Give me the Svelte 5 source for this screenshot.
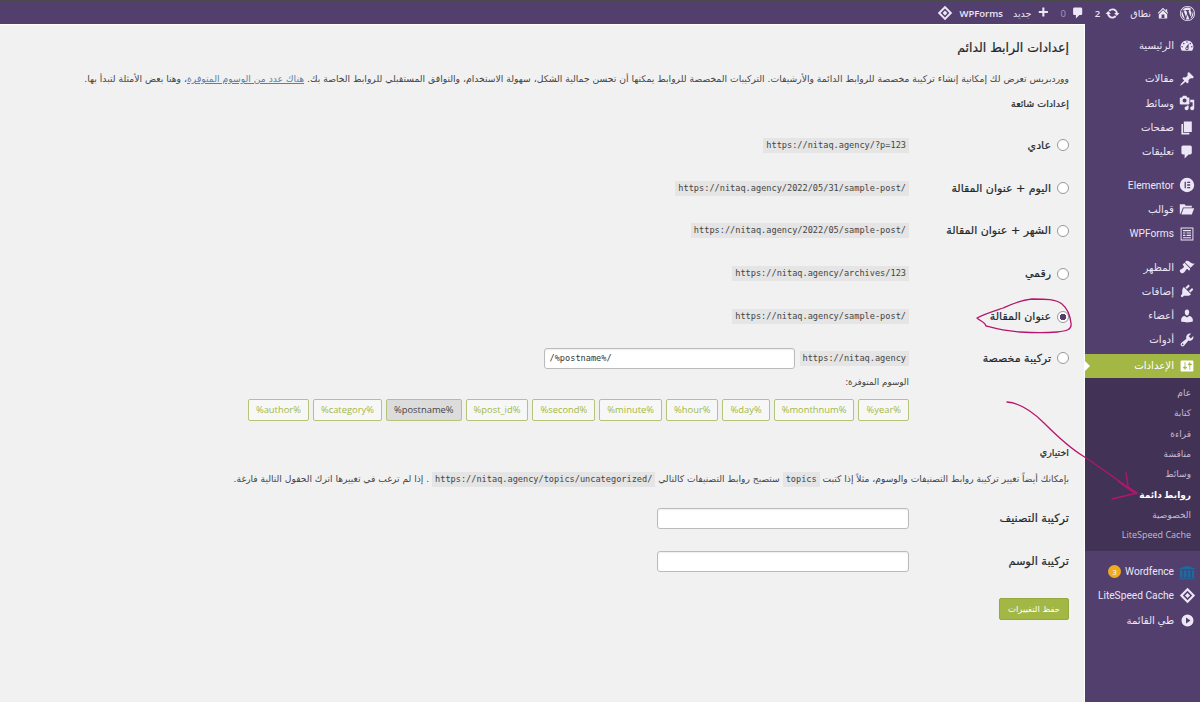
<script>
	const icons = {
		dash: 'M3.76 16h12.48c1.1-1.37 1.76-3.11 1.76-5 0-4.42-3.58-8-8-8s-8 3.58-8 8c0 1.89.66 3.63 1.76 5zM10 4c.55 0 1 .45 1 1s-.45 1-1 1-1-.45-1-1 .45-1 1-1zM6 6c.55 0 1 .45 1 1s-.45 1-1 1-1-.45-1-1 .45-1 1-1zm8 0c.55 0 1 .45 1 1s-.45 1-1 1-1-.45-1-1 .45-1 1-1zm-5.37 5.55L12 7v6c0 1.1-.9 2-2 2s-2-.9-2-2c0-.57.24-1.08.63-1.45zM4 10c.55 0 1 .45 1 1s-.45 1-1 1-1-.45-1-1 .45-1 1-1zm12 0c.55 0 1 .45 1 1s-.45 1-1 1-1-.45-1-1 .45-1 1-1zm-5 3c0-.55-.45-1-1-1s-1 .45-1 1 .45 1 1 1 1-.45 1-1z',
		pin: 'M10.44 3.02l1.82-1.82 6.36 6.35-1.83 1.82c-1.05-.68-2.48-.57-3.41.36l-.75.75c-.92.93-1.04 2.35-.35 3.41l-1.83 1.82-2.41-2.41-2.8 2.79c-.42.42-3.38 2.71-3.8 2.29s1.86-3.39 2.28-3.81l2.79-2.79L4.1 9.36l1.83-1.82c1.05.69 2.48.57 3.4-.36l.75-.75c.93-.92 1.05-2.35.36-3.41z',
		media: 'M13 11V4c0-.55-.45-1-1-1h-1.67L9 1H5L3.67 3H2c-.55 0-1 .45-1 1v7c0 .55.45 1 1 1h10c.55 0 1-.45 1-1zM7 4.5c1.38 0 2.5 1.12 2.5 2.5S8.38 9.5 7 9.5 4.5 8.38 4.5 7 5.62 4.5 7 4.5zM14 6h5v10.5c0 1.38-1.12 2.5-2.5 2.5S14 17.88 14 16.5s1.12-2.5 2.5-2.5c.17 0 .34.02.5.05V9h-3V6zm-4 8.05V13h2v3.5c0 1.38-1.12 2.5-2.5 2.5S7 17.88 7 16.5 8.12 14 9.5 14c.17 0 .34.02.5.05z',
		page: 'M6 15V2h10v13H6zm-1 1h8v2H3V5h2v11z',
		comment: 'M5 2h9c1.1 0 2 .9 2 2v7c0 1.1-.9 2-2 2h-2l-5 5v-5H5c-1.1 0-2-.9-2-2V4c0-1.1.9-2 2-2z',
		elementor: 'M10 1a9 9 0 1 0 0 18 9 9 0 0 0 0-18zM7 6h1.6v8H7V6zm3.2 0H14v1.6h-3.8V6zm0 3.2H14v1.6h-3.8V9.2zm0 3.2H14V14h-3.8v-1.6z',
		folder: 'M1 4h6l1.5 2H16v2H5L2 16H1V4zm4.8 5H19l-3 8H3l2.8-8z',
		forms: 'M2 2h16v16H2V2zm1.2 1.2v13.6h13.6V3.2H3.2zM5 5h10v1.5H5V5zm0 3h3v1.5H5V8zm4.500 0H15v1.500H9.500V8zM5 11h3v1.500H5V11zm4.500 0H15v1.500H9.500V11zM5 14h10v1.200H5V14z',
		brush: 'M14.48 11.06L7.41 3.99l1.5-1.5c.5-.56 2.3-.47 3.51.32 1.21.8 1.43 1.28 2.91 2.1 1.18.64 2.45 1.26 4.45.85zm-.71.71L6.7 4.7 4.93 6.47c-.39.39-.39 1.02 0 1.41l1.06 1.06c.39.39.39 1.03 0 1.42-.6.6-1.43 1.11-2.21 1.69-.35.26-.7.53-1.01.84C1.43 13.23.76 14.4 1 15.4c.23 1 1.47 2.24 2.46 2.48 1 .24 2.17-.43 3.51-1.76.31-.31.58-.66.85-1.02.57-.78 1.08-1.61 1.69-2.21.39-.39 1.02-.39 1.41 0l1.06 1.06c.39.39 1.02.39 1.41 0z',
		plug: 'M13.11 4.36L9.87 7.6 8 5.73l3.24-3.24c.35-.34 1.05-.2 1.56.32.52.51.66 1.21.31 1.55zm-8 1.77l.91-1.12 9.01 9.01-1.19.84c-.71.71-2.63 1.16-3.82 1.16H6.14L4.9 17.26c-.59.59-1.54.59-2.12 0-.59-.58-.59-1.53 0-2.12l1.24-1.24v-3.88c0-1.13.4-3.19 1.09-3.89zm7.26 3.97l3.24-3.24c.34-.35 1.04-.21 1.55.31.52.51.66 1.21.31 1.55l-3.24 3.25z',
		user: 'M10 9.25c-2.27 0-2.73-3.44-2.73-3.44C7 4.02 7.82 2 9.97 2c2.16 0 2.98 2.02 2.71 3.81 0 0-.41 3.44-2.68 3.44zm0 2.57L12.72 10c2.39 0 4.52 2.33 4.52 4.53v2.49s-3.65 1.13-7.24 1.13c-3.65 0-7.24-1.13-7.24-1.13v-2.49c0-2.25 1.94-4.48 4.47-4.48z',
		tool: 'M16.68 9.77c-1.34 1.34-3.3 1.67-4.95.99l-5.41 6.52c-.99.99-2.59.99-3.58 0s-.99-2.59 0-3.57l6.52-5.42c-.68-1.65-.35-3.61.99-4.95 1.28-1.28 3.12-1.62 4.72-1.06l-2.89 2.89 2.82 2.82 2.86-2.87c.53 1.58.18 3.39-1.08 4.65zM3.81 16.21c.4.39 1.04.39 1.43 0 .4-.4.4-1.04 0-1.43-.39-.4-1.03-.4-1.43 0-.39.39-.39 1.03 0 1.43z',
		settings: 'M18 16V4c0-.55-.45-1-1-1H3c-.55 0-1 .45-1 1v12c0 .55.45 1 1 1h14c.55 0 1-.45 1-1zM8 11h1c.55 0 1 .45 1 1s-.45 1-1 1H8v1.5c0 .28-.22.5-.5.5s-.5-.22-.5-.5V13H6c-.55 0-1-.45-1-1s.45-1 1-1h1V5.5c0-.28.22-.5.5-.5s.5.22.5.5V11zm5-2h-1c-.55 0-1-.45-1-1s.45-1 1-1h1V5.5c0-.28.22-.5.5-.5s.5.22.5.5V7h1c.55 0 1 .45 1 1s-.45 1-1 1h-1v5.5c0 .28-.22.5-.5.5s-.5-.22-.5-.5V9z',
		home: 'M16 8.5l1.530 1.530-1.060 1.060L10 4.620l-6.470 6.470-1.060-1.060L10 2.500l4 4v-2h2v4zm-6-2.460l6 5.990V18H4v-5.970zM12 17v-5H8v5h4z',
		update: 'M10.200 3.280c3.530 0 6.430 2.610 6.920 6h2.080l-3.500 4-3.500-4h2.320c-.45-1.970-2.210-3.450-4.320-3.450-1.450 0-2.730.71-3.540 1.780L4.950 5.660C6.230 4.200 8.110 3.280 10.200 3.280zm-.4 13.440c-3.520 0-6.430-2.610-6.920-6H.8l3.500-4c1.170 1.330 2.330 2.670 3.500 4H5.480c.45 1.970 2.210 3.450 4.320 3.450 1.450 0 2.730-.71 3.540-1.780l1.710 1.950c-1.280 1.460-3.150 2.380-5.250 2.380z',
		plus: 'M17 7v3h-5v5H9v-5H4V7h5V2h3v5h5z',
		wp: 'M20 10c0-5.520-4.480-10-10-10S0 4.480 0 10s4.480 10 10 10 10-4.480 10-10zM10 1.010c4.960 0 8.990 4.030 8.990 8.990s-4.030 8.990-8.990 8.990S1.010 14.960 1.010 10 5.040 1.010 10 1.010zM8.010 14.820L4.960 6.610c.49-.03 1.050-.08 1.050-.08.43-.05.38-1.010-.06-.99 0 0-1.290.1-2.130.1-.15 0-.33 0-.52-.01 1.440-2.170 3.900-3.600 6.700-3.600 2.090 0 3.990.79 5.410 2.090-.6-.08-1.450.35-1.450 1.420 0 .66.38 1.220.79 1.880.31.54.5 1.220.5 2.210 0 1.340-1.270 4.480-1.270 4.480l-2.710-7.500c.48-.03.75-.16.75-.16.43-.05.38-1.100-.05-1.080 0 0-1.300.11-2.140.11-.78 0-2.110-.11-2.110-.11-.43-.02-.48 1.060-.05 1.080l.84.08 1.120 3.040zm6.020 2.150L16.640 10s.67-1.690.39-3.810c.63 1.140.94 2.420.94 3.810 0 2.960-1.560 5.580-3.940 6.970zM2.680 6.770L6.500 17.250c-2.670-1.300-4.470-4.080-4.470-7.250 0-1.160.2-2.230.65-3.230zm7.450 4.530l2.290 6.250c-.75.27-1.570.42-2.420.42-.72 0-1.410-.11-2.060-.3z',
		collapse: 'M10 2a8 8 0 1 0 0 16 8 8 0 0 0 0-16zM8 6l6 4-6 4V6z',
		diamond: 'M10 1l9 9-9 9-9-9 9-9zm0 3.500L4.500 10l5.500 5.500 5.500-5.500L10 4.500zm0 2.500l3 3-3 3-3-3 3-3z',
		fence: 'M1 6l9-3 9 3v1H1V6zm1 2h3v8H2V8zm4.500 0h3v8h-3V8zm4.500 0h3v8h-3V8zm4.500 0h2.500v8h-2.500V8zM1 17h18v1H1v-1z'
	};

	const groups = [
		[{ label: 'الرئيسية', icon: 'dash' }],
		[
			{ label: 'مقالات', icon: 'pin' },
			{ label: 'وسائط', icon: 'media' },
			{ label: 'صفحات', icon: 'page' },
			{ label: 'تعليقات', icon: 'comment' }
		],
		[
			{ label: 'Elementor', icon: 'elementor' },
			{ label: 'قوالب', icon: 'folder' },
			{ label: 'WPForms', icon: 'forms' }
		],
		[
			{ label: 'المظهر', icon: 'brush' },
			{ label: 'إضافات', icon: 'plug' },
			{ label: 'أعضاء', icon: 'user' },
			{ label: 'أدوات', icon: 'tool' }
		]
	];

	const submenu = ['عام', 'كتابة', 'قراءة', 'مناقشة', 'وسائط', 'روابط دائمة', 'الخصوصية', 'LiteSpeed Cache'];

	const options = [
		{ label: 'عادي', url: 'https://nitaq.agency/?p=123' },
		{ label: 'اليوم + عنوان المقالة', url: 'https://nitaq.agency/2022/05/31/sample-post/' },
		{ label: 'الشهر + عنوان المقالة', url: 'https://nitaq.agency/2022/05/sample-post/' },
		{ label: 'رقمي', url: 'https://nitaq.agency/archives/123' },
		{ label: 'عنوان المقالة', url: 'https://nitaq.agency/sample-post/', checked: true }
	];

	const tags = ['%year%', '%monthnum%', '%day%', '%hour%', '%minute%', '%second%', '%post_id%', '%postname%', '%category%', '%author%'];
</script>

{#snippet icon(name, size = 16)}
	<svg class="ico" width={size} height={size} viewBox="0 0 20 20" fill="currentColor" fill-rule="evenodd" aria-hidden="true"><path d={icons[name]} /></svg>
{/snippet}

<div class="page" dir="rtl">
	<header class="bar">
		<span class="bar-item logo">{@render icon('wp', 15)}</span>
		<span class="bar-item">{@render icon('home', 14)}<span>نطاق</span></span>
		<span class="bar-item">{@render icon('update', 15)}<b>2</b></span>
		<span class="bar-item">{@render icon('comment', 14)}<span class="muted">0</span></span>
		<span class="bar-item">{@render icon('plus', 14)}<span>جديد</span></span>
		<span class="bar-item"><b>WPForms</b></span>
		<span class="bar-item lsc">{@render icon('diamond', 16)}</span>
	</header>

	<div class="layout">
		<nav class="side">
			{#each groups as group}
				<ul class="group">
					{#each group as item}
						<li class="item"><span class="item-ico">{@render icon(item.icon)}</span><span class="item-label">{item.label}</span></li>
					{/each}
				</ul>
			{/each}

			<div class="item active"><span class="item-ico">{@render icon('settings')}</span><span class="item-label">الإعدادات</span></div>
			<ul class="sub">
				{#each submenu as entry}
					<li class:current={entry === 'روابط دائمة'}>{entry}</li>
				{/each}
			</ul>

			<ul class="group">
				<li class="item"><span class="item-ico fence">{@render icon('fence', 18)}</span><span class="item-label">Wordfence</span><span class="badge">3</span></li>
				<li class="item"><span class="item-ico">{@render icon('diamond', 17)}</span><span class="item-label">LiteSpeed Cache</span></li>
				<li class="item"><span class="item-ico">{@render icon('collapse', 15)}</span><span class="item-label">طي القائمة</span></li>
			</ul>
		</nav>

		<main class="main">
			<h1>إعدادات الرابط الدائم</h1>
			<p class="desc">ووردبريس تعرض لك إمكانية إنشاء تركيبة مخصصة للروابط الدائمة والأرشيفات. التركيبات المخصصة للروابط يمكنها أن تحسن جمالية الشكل، سهولة الاستخدام، والتوافق المستقبلي للروابط الخاصة بك. <a href="#tags">هناك عدد من الوسوم المتوفرة</a>، وهنا بعض الأمثلة لتبدأ بها.</p>
			<h2>إعدادات شائعة</h2>

			<div class="rows">
				{#each options as opt}
					<div class="row">
						<label class="opt"><input type="radio" name="perm" checked={opt.checked} />{opt.label}</label>
						<div class="cell"><code dir="ltr">{opt.url}</code></div>
					</div>
				{/each}
				<div class="row custom">
					<label class="opt"><input type="radio" name="perm" />تركيبة مخصصة</label>
					<div class="cell">
						<div class="struct">
							<code dir="ltr">https://nitaq.agency</code>
							<input class="text mono" dir="ltr" type="text" value="/%postname%/" />
						</div>
						<p class="avail">الوسوم المتوفرة:</p>
						<div class="tags" dir="rtl">
							{#each tags as tag}
								<span class="tag" class:on={tag === '%postname%'}>{tag}</span>
							{/each}
						</div>
					</div>
				</div>
			</div>

			<h2 class="opt-title">اختياري</h2>
			<p class="desc second">بإمكانك أيضاً تغيير تركيبة روابط التصنيفات والوسوم، مثلاً إذا كتبت <code dir="ltr">topics</code> ستصبح روابط التصنيفات كالتالي <code dir="ltr">https://nitaq.agency/topics/uncategorized/</code> . إذا لم ترغب في تغييرها اترك الحقول التالية فارغة.</p>

			<div class="fields">
				<div class="field"><span class="field-label">تركيبة التصنيف</span><input class="text wide" type="text" /></div>
				<div class="field"><span class="field-label">تركيبة الوسم</span><input class="text wide" type="text" /></div>
			</div>

			<button class="save" type="button">حفظ التغييرات</button>
		</main>
	</div>

	<!-- hand drawn annotation on top of the screenshot -->
	<svg class="marks" width="1200" height="702" viewBox="0 0 1200 702" fill="none" stroke="#b5166b" stroke-width="1.300" stroke-linecap="round" stroke-linejoin="round" aria-hidden="true">
		<path d="M986 326C997 329 1004 331 1020 332C1035 333 1046 333 1057 332C1066 331 1072 330 1071 323C1070 315 1068 309 1062 304C1056 299 1046 299 1032 299C1020 300 1010 305 1003 308C994 311 984 314 977 318C980 321 985 322 986 326" />
		<path d="M1007 402C1020 403 1032 411 1044 423C1056 435 1070 448 1083 456C1100 467 1118 481 1137 493" />
		<path d="M1126 473C1127 480 1128 484 1128 487L1137 493" />
		<path d="M1118 481C1124 486 1130 490 1136 494" />
		<path d="M1112 499C1120 497 1129 495 1137 493" />
	</svg>
</div>

<style>
	:global(body) {
		margin: 0;
		background: #f1f1f1;
	}
	.page {
		position: relative;
		width: 1200px;
		height: 702px;
		overflow: hidden;
		font-family: 'DejaVu Sans', 'Noto Sans', sans-serif;
		font-size: 10px;
		color: #444;
		background: #f1f1f1;
	}
	ul {
		list-style: none;
		margin: 0;
		padding: 0;
	}
	.bar {
		display: flex;
		align-items: center;
		height: 22px;
		margin-top: 2px;
		padding-right: 5px;
		gap: 10px;
		background: #523f6d;
		color: #ece6f6;
		box-shadow: 0 -2px 0 #4a4a4a;
		font-size: 9.500px;
	}
	.bar-item {
		display: flex;
		align-items: center;
		gap: 5px;
	}
	.bar-item b {
		font-family: 'Open Sans', sans-serif;
		font-size: 9.500px;
		font-weight: 600;
	}
	.lsc {
		margin-right: -4px;
	}
	.muted {
		color: #a79bbb;
		font-family: 'Open Sans', sans-serif;
	}
	.ico {
		display: block;
		flex: none;
	}
	.layout {
		display: flex;
		height: 678px;
	}
	.side {
		width: 115px;
		flex: none;
		background: #523f6d;
		color: #ece6f6;
		padding-top: 9.500px;
		box-sizing: border-box;
	}
	.group {
		margin-bottom: 9px;
	}
	.group:nth-child(4) {
		margin-bottom: 1.500px;
	}
	.item {
		display: flex;
		align-items: center;
		height: 24.300px;
		padding-right: 5px;
		gap: 5px;
		white-space: nowrap;
	}
	.item-ico {
		width: 16px;
		display: flex;
		justify-content: center;
		flex: none;
	}
	.item-label {
		font-family: Roboto, 'DejaVu Sans', sans-serif;
		font-size: 10.200px;
	}
	.active {
		position: relative;
		height: 24px;
		background: #a3b745;
		color: #fff;
	}
	.active::after {
		content: '';
		position: absolute;
		left: 0;
		top: 7px;
		border: 5px solid transparent;
		border-right: 0;
		border-left-color: #fff;
	}
	.sub {
		background: #413256;
		padding: 5.500px 9px 6px 0;
		font-family: 'Open Sans', 'DejaVu Sans', sans-serif;
		font-size: 9px;
		color: #c5bcd3;
		margin-bottom: 8px;
	}
	.sub li {
		height: 20.300px;
		line-height: 20px;
		white-space: nowrap;
	}
	.sub .current {
		color: #fff;
		font-weight: 700;
	}
	.fence {
		color: #1d6a9e;
	}
	.badge {
		width: 13px;
		height: 13px;
		margin-right: -1px;
		border-radius: 50%;
		background: #f0ac1c;
		color: #fff;
		text-align: center;
		line-height: 13px;
		font-size: 8px;
		font-family: 'Open Sans', sans-serif;
	}
	.main {
		flex: 1;
		min-width: 0;
		padding: 0 15px 0 0;
		border-top: 1px solid #fff;
		border-right: 1px solid #fff;
		box-sizing: border-box;
	}
	h1 {
		margin: 14px 0 0;
		font-size: 12.500px;
		line-height: 17px;
		font-weight: 400;
		color: #23282d;
		-webkit-text-stroke: 0.2px #23282d;
	}
	.desc {
		margin: 16px 0 0;
		font-size: 9.230px;
		line-height: 14px;
		white-space: nowrap;
	}
	.desc a {
		color: #5a7fa8;
	}
	h2 {
		margin: 11px 0 0;
		font-size: 9.500px;
		line-height: 14px;
		font-weight: 400;
		color: #23282d;
		-webkit-text-stroke: 0.2px #23282d;
	}
	.rows {
		margin-top: 13px;
	}
	.row {
		display: flex;
		height: 42.800px;
		align-items: center;
	}
	.opt {
		display: flex;
		align-items: center;
		gap: 6px;
		width: 160px;
		flex: none;
		font-size: 11px;
		color: #23282d;
		white-space: nowrap;
		-webkit-text-stroke: 0.2px #23282d;
	}
	.opt input {
		appearance: none;
		width: 12px;
		height: 12px;
		margin: 0;
		flex: none;
		border: 1px solid #999;
		border-radius: 50%;
		background: #fff;
		box-sizing: border-box;
	}
	.opt input:checked {
		background: radial-gradient(circle, #523f6d 0 3px, #fff 3.500px);
	}
	code {
		display: inline-block;
		padding: 1px 3px;
		background: #e5e5e5;
		color: #444;
		font-family: 'DejaVu Sans Mono', monospace;
		font-size: 8.600px;
		line-height: 13px;
	}
	.custom {
		height: auto;
		align-items: flex-start;
		padding-top: 10px;
	}
	.custom .opt {
		height: 21px;
	}
	.struct {
		display: flex;
		align-items: center;
		gap: 5px;
	}
	.text {
		height: 21px;
		border: 1px solid #bbb;
		border-radius: 3px;
		background: #fff;
		box-sizing: border-box;
		padding: 0 5px;
		box-shadow: inset 0 1px 2px rgba(0, 0, 0, 0.07);
	}
	.mono {
		width: 251px;
		font-family: 'DejaVu Sans Mono', monospace;
		font-size: 8.600px;
		color: #32373c;
	}
	.avail {
		margin: 7px 0 0;
		font-size: 8.800px;
		line-height: 13px;
		color: #444;
	}
	.tags {
		display: flex;
		gap: 4px;
		margin-top: 10px;
	}
	.tag {
		height: 22px;
		padding: 0 7px;
		display: flex;
		align-items: center;
		border: 1px solid #b6c47a;
		border-radius: 2px;
		box-sizing: border-box;
		background: #f7f7f7;
		color: #a3b745;
		font-family: 'Open Sans', sans-serif;
		font-size: 9.400px;
	}
	.tag.on {
		background: #dcdcdc;
		color: #444;
	}
	.opt-title {
		margin-top: 25px;
	}
	.second {
		margin-top: 12px;
		font-size: 9.130px;
	}
	.fields {
		margin-top: 10px;
	}
	.field {
		display: flex;
		align-items: center;
		height: 43px;
	}
	.field-label {
		width: 160px;
		flex: none;
		font-size: 11.300px;
		color: #23282d;
		-webkit-text-stroke: 0.2px #23282d;
	}
	.wide {
		width: 252px;
	}
	.save {
		display: block;
		width: 70px;
		height: 22px;
		margin-top: 15px;
		padding: 0;
		border: 1px solid #95a83d;
		border-radius: 2px;
		background: #a3b745;
		color: #fff;
		font-family: inherit;
		font-size: 8.500px;
	}
	.marks {
		position: absolute;
		inset: 0;
		pointer-events: none;
	}
</style>
